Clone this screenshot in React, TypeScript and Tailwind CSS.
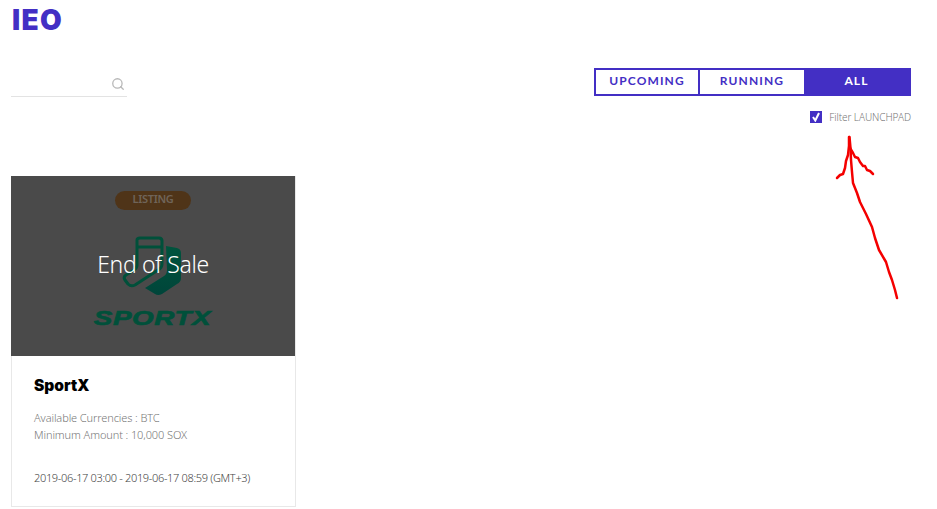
import { Search } from 'lucide-react';

const bodyFont = "font-['Noto_Sans','Open_Sans',sans-serif]";
const headFont = "font-['Lato','Inter',sans-serif]";
const heavyFont = "font-['Inter','Lato',sans-serif]";

function SockLogo() {
  return (
    <svg className="absolute left-[109px] top-[56px] h-[68px] w-[66px]" viewBox="0 0 66 68" fill="none">
      <defs>
        <linearGradient id="sock" x1="0" y1="0" x2="0" y2="1">
          <stop offset="0" stopColor="#00543d" />
          <stop offset="1" stopColor="#00453a" />
        </linearGradient>
      </defs>
      <path d="M46 14 L57 16 Q61 17 61 21 V46 Q61 50 57 52 L42 62 Q38 64 35 62 L25 56 L44 44 Q47 42 47 38 Z" fill="url(#sock)" />
      <path d="M17 8 Q17 6 20 6 H39 Q42 6 42 9 V32 Q42 36 38 38 L15 53 Q11 55 8 52 L5 48 Q3 45 6 43 L14 38 Q17 36 17 33 Z" stroke="#00503a" strokeWidth="3" strokeLinejoin="round" />
      <path d="M17 15 H42" stroke="#00503a" strokeWidth="3" />
    </svg>
  );
}

function Tabs() {
  return (
    <div className={`flex h-[28px] w-[317px] border-2 border-[#432fc4] text-[12px] font-bold tracking-[1.1px] ${headFont}`}>
      <div className="flex w-[104px] items-center justify-center border-r-2 border-[#432fc4] pb-[3px] text-[#432fc4]">UPCOMING</div>
      <div className="flex w-[104px] items-center justify-center pb-[3px] text-[#432fc4]">RUNNING</div>
      <div className="flex flex-1 items-center justify-center bg-[#432fc4] pb-[3px] text-white">ALL</div>
    </div>
  );
}

function SaleCard() {
  return (
    <div className="flex h-[331px] w-[285px] flex-col border border-t-0 border-[#e8e8e8]">
      <div className="relative -ml-px h-[180px] shrink-0 bg-[#4a4a4a]">
        <div className="flex justify-center pt-[15px]">
          <span className={`flex h-[19px] w-[76px] items-center justify-center rounded-full bg-[#4f3418] pb-[2px] text-[11px] font-semibold tracking-[-0.3px] text-[#6f6459] ${bodyFont}`}>LISTING</span>
        </div>
        <SockLogo />
        <div className="absolute left-[-1px] right-0 top-[129px] scale-x-[1.32] text-center text-[21px] font-black italic leading-[26px] tracking-[0.5px] text-[#00503a] [-webkit-text-stroke:0.7px_#00503a] font-['Liberation_Sans',sans-serif]">SPORTX</div>
        <div className={`absolute inset-x-0 top-[71px] text-center text-[23px] font-light leading-[34px] tracking-[-0.4px] text-white ${bodyFont}`}>End of Sale</div>
      </div>
      <div className={`flex flex-1 flex-col pl-[22px] ${bodyFont}`}>
        <div className={`mt-[17px] text-[15.5px] font-black leading-[26px] text-black ${heavyFont}`}>SportX</div>
        <div className="mt-[10px] text-[11px] font-light leading-[17px] tracking-[-0.1px] text-[#777]">
          <p>Available Currencies : BTC</p>
          <p>Minimum Amount : 10,000 SOX</p>
        </div>
        <div className="mt-[26px] text-[11px] font-light leading-[17px] tracking-[-0.33px] text-[#444]">2019-06-17 03:00 - 2019-06-17 08:59 (GMT+3)</div>
      </div>
    </div>
  );
}

export default function App() {
  return (
    <div className="relative h-[509px] w-[937px] overflow-hidden bg-white pl-[11px] pr-[26px]">
      <h1 className={`pl-px pt-[3px] text-[28px] font-black leading-[34px] tracking-[1.3px] text-[#432fc4] ${heavyFont}`}>IEO</h1>

      <div className="mt-[31px] flex items-start justify-between">
        <div className="flex h-[29px] w-[116px] items-center justify-end border-b border-[#e3e3e3] pr-[2px] pt-[3px]">
          <Search size={14} strokeWidth={2.2} className="text-[#b8b8b8]" />
        </div>
        <div className="flex flex-col items-end">
          <Tabs />
          <label className={`mt-[14px] flex items-center text-[10px] font-light leading-[14px] tracking-[-0.07px] text-[#777] ${bodyFont}`}>
            <span className="mr-[7px] flex h-[12px] w-[12px] items-center justify-center bg-[#432fc4]">
              <svg width="10" height="10" viewBox="0 0 10 10" fill="none">
                <path d="M2 5 L4.3 8.5 L8 1" stroke="white" strokeWidth="2" />
              </svg>
            </span>
            Filter LAUNCHPAD
          </label>
        </div>
      </div>

      <div className="mt-[52px]">
        <SaleCard />
      </div>

      {/* hand drawn arrow over the page */}
      <svg className="absolute left-0 top-0 h-[509px] w-[937px]" viewBox="0 0 937 509" fill="none">
        <path d="M849.5 137 L850.5 148 L851 160 L852 172 L853 183 L857 193 L860 202 L866 214 L872 227 L875 238 L879 250 L886 262 L889 272 L892 280 L895 290 L897 298" stroke="#f40000" strokeWidth="2.5" strokeLinejoin="round" strokeLinecap="round" />
        <path d="M849 137 L849 146 L848 155 L846 161 L845 168 L843 174 L840 175 L837 178" stroke="#f40000" strokeWidth="2.5" strokeLinejoin="round" strokeLinecap="round" />
        <path d="M850 148 L853 153 L855 157 L858 158 L860 162 L863 166 L865 166 L867 170 L870 171 L873 174" stroke="#f40000" strokeWidth="2.5" strokeLinejoin="round" strokeLinecap="round" />
      </svg>
    </div>
  );
}
